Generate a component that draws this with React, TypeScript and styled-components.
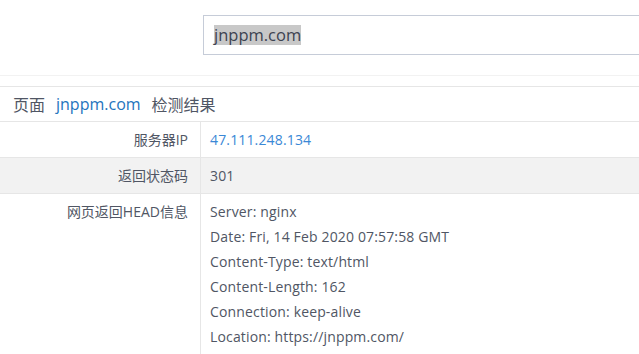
import React from 'react';
import styled, { createGlobalStyle } from 'styled-components';

const GlobalStyle = createGlobalStyle`
  html, body {
    margin: 0;
    padding: 0;
    background: #ffffff;
    overflow: hidden;
  }
  body {
    font-family: 'Open Sans', 'Noto Sans CJK SC', sans-serif;
    color: #505664;
  }
`;

const Page = styled.div`
  width: 639px;
  overflow: hidden;
`;

const SearchBar = styled.div`
  display: flex;
  padding: 15px 0 20px 203px;
  border-bottom: 1px solid #f2f2f2;
`;

const SearchInput = styled.div`
  flex: none;
  width: 520px;
  height: 38px;
  border: 1px solid #c6ccd8;
  display: flex;
  align-items: center;
  padding-left: 10px;
  box-sizing: content-box;
`;

const Selected = styled.span`
  background: #c8c8c8;
  color: #3c4250;
  font-size: 16.5px;
  line-height: 20px;
`;

const Panel = styled.section`
  margin-top: 10px;
  border-top: 1px solid #e6e6e6;
`;

const PanelHeader = styled.div`
  height: 34px;
  display: flex;
  align-items: center;
  gap: 11px;
  padding-left: 13px;
  font-size: 16px;
  border-bottom: 1px solid #e6e6e6;
`;

const Domain = styled.span`
  color: #2474bd;
  font-size: 16px;
`;

const Row = styled.div<{ $shade?: boolean; $top?: boolean }>`
  display: flex;
  align-items: ${(p) => (p.$top ? 'flex-start' : 'center')};
  min-height: 35px;
  background: ${(p) => (p.$shade ? '#f2f2f2' : '#ffffff')};
  border-bottom: 1px solid #e6e6e6;
  font-size: 14px;

  &:last-child {
    border-bottom: none;
    min-height: 170px;
  }
`;

const Label = styled.div<{ $top?: boolean }>`
  width: 188px;
  padding-right: 12px;
  text-align: right;
  align-self: stretch;
  display: flex;
  justify-content: flex-end;
  align-items: ${(p) => (p.$top ? 'flex-start' : 'center')};
  padding-top: ${(p) => (p.$top ? '5px' : '0')};
  line-height: 25px;
  border-right: 1px solid #e6e6e6;
`;

const Value = styled.div<{ $link?: boolean; $top?: boolean }>`
  padding-left: 9px;
  padding-top: ${(p) => (p.$top ? '5px' : '0')};
  line-height: 25px;
  letter-spacing: 0.15px;
  color: ${(p) => (p.$link ? '#3a88d6' : 'inherit')};
`;

const headers = [
  'Server: nginx',
  'Date: Fri, 14 Feb 2020 07:57:58 GMT',
  'Content-Type: text/html',
  'Content-Length: 162',
  'Connection: keep-alive',
  'Location: https://jnppm.com/',
];

const App = () => {
  return (
    <Page>
      <GlobalStyle />
      <SearchBar>
        <SearchInput>
          <Selected>jnppm.com</Selected>
        </SearchInput>
      </SearchBar>
      <Panel>
        <PanelHeader>
          <span>页面</span>
          <Domain>jnppm.com</Domain>
          <span>检测结果</span>
        </PanelHeader>
        <Row>
          <Label>服务器IP</Label>
          <Value $link>47.111.248.134</Value>
        </Row>
        <Row $shade>
          <Label>返回状态码</Label>
          <Value>301</Value>
        </Row>
        <Row $top>
          <Label $top>网页返回HEAD信息</Label>
          <Value $top>
            {headers.map((h) => (
              <div key={h}>{h}</div>
            ))}
          </Value>
        </Row>
      </Panel>
    </Page>
  );
};

export default App;
